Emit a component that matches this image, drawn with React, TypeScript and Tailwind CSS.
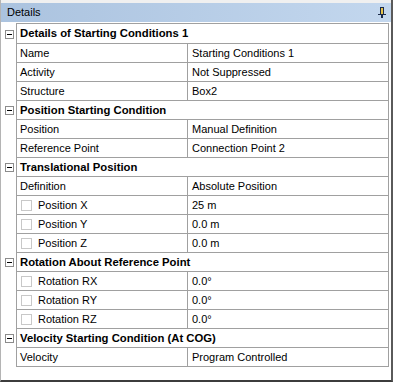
import { FC } from "react";

type Row =
  | { kind: "header"; label: string }
  | { kind: "prop"; label: string; value: string; check?: boolean };

const rows: Row[] = [
  { kind: "header", label: "Details of Starting Conditions 1" },
  { kind: "prop", label: "Name", value: "Starting Conditions 1" },
  { kind: "prop", label: "Activity", value: "Not Suppressed" },
  { kind: "prop", label: "Structure", value: "Box2" },
  { kind: "header", label: "Position Starting Condition" },
  { kind: "prop", label: "Position", value: "Manual Definition" },
  { kind: "prop", label: "Reference Point", value: "Connection Point 2" },
  { kind: "header", label: "Translational Position" },
  { kind: "prop", label: "Definition", value: "Absolute Position" },
  { kind: "prop", label: "Position X", value: "25 m", check: true },
  { kind: "prop", label: "Position Y", value: "0.0 m", check: true },
  { kind: "prop", label: "Position Z", value: "0.0 m", check: true },
  { kind: "header", label: "Rotation About Reference Point" },
  { kind: "prop", label: "Rotation RX", value: "0.0°", check: true },
  { kind: "prop", label: "Rotation RY", value: "0.0°", check: true },
  { kind: "prop", label: "Rotation RZ", value: "0.0°", check: true },
  { kind: "header", label: "Velocity Starting Condition (At COG)" },
  { kind: "prop", label: "Velocity", value: "Program Controlled" },
];

const PinIcon: FC = () => (
  <svg width="8" height="11" viewBox="0 0 8 11" shapeRendering="crispEdges">
    <rect x="2" y="0" width="4" height="1" fill="#1b2a4a" />
    <rect x="2" y="1" width="1" height="6" fill="#1b2a4a" />
    <rect x="3" y="1" width="2" height="6" fill="#e6c34a" />
    <rect x="5" y="1" width="1" height="6" fill="#1b2a4a" />
    <rect x="0" y="7" width="8" height="1" fill="#1b2a4a" />
    <rect x="3" y="8" width="2" height="3" fill="#1b2a4a" />
  </svg>
);

const MinusBox: FC = () => (
  <div className="w-[9px] h-[9px] border border-[#8c8c8c] bg-white flex items-center justify-center">
    <div className="w-[5px] h-px bg-black" />
  </div>
);

const App: FC = () => {
  return (
    <div
      className="w-[393px] h-[382px] bg-white border-l border-l-[#b4b4b4] border-r-2 border-r-[#5a5a5a] border-b-2 border-b-[#3c3c3c] text-[11px] text-black overflow-hidden"
      style={{ fontFamily: '"Liberation Sans", Arial, sans-serif' }}
    >
      <div className="h-[22px] flex flex-col">
        <div className="h-[3px] bg-[#f0f0f0]" />
        <div className="flex-1 flex items-center justify-between pl-[6px] pr-[5px] bg-gradient-to-r from-[#abc3df] to-[#c3d7ee]">
          <span className="leading-none">Details</span>
          <PinIcon />
        </div>
      </div>

      <div className="mt-px flex">
        <div className="w-[15px]" />
        <div className="w-[373px] border-t border-[#a0a0a0]" />
      </div>

      {rows.map((row, i) => (
        <div key={i} className={`flex ${i === 0 ? "h-[20px]" : "h-[19px]"}`}>
          <div className="w-[15px] flex items-center justify-center pl-px">
            {row.kind === "header" && <MinusBox />}
          </div>
          {row.kind === "header" ? (
            <div className="w-[373px] border-l border-r border-b border-[#a0a0a0] flex items-center pl-[3px] font-bold text-[11.3px]">
              {row.label}
            </div>
          ) : (
            <div className="w-[373px] border-l border-r border-b border-[#a0a0a0] flex">
              <div className="w-[170px] flex items-center pl-[3px]">
                {row.check && (
                  <div className="w-[11px] h-[11px] border border-[#c8c8c8] bg-white ml-px mr-[6px]" />
                )}
                <span>{row.label}</span>
              </div>
              <div className="flex-1 border-l border-[#a0a0a0] flex items-center pl-[4px]">
                {row.value}
              </div>
            </div>
          )}
        </div>
      ))}
    </div>
  );
};

export default App;
